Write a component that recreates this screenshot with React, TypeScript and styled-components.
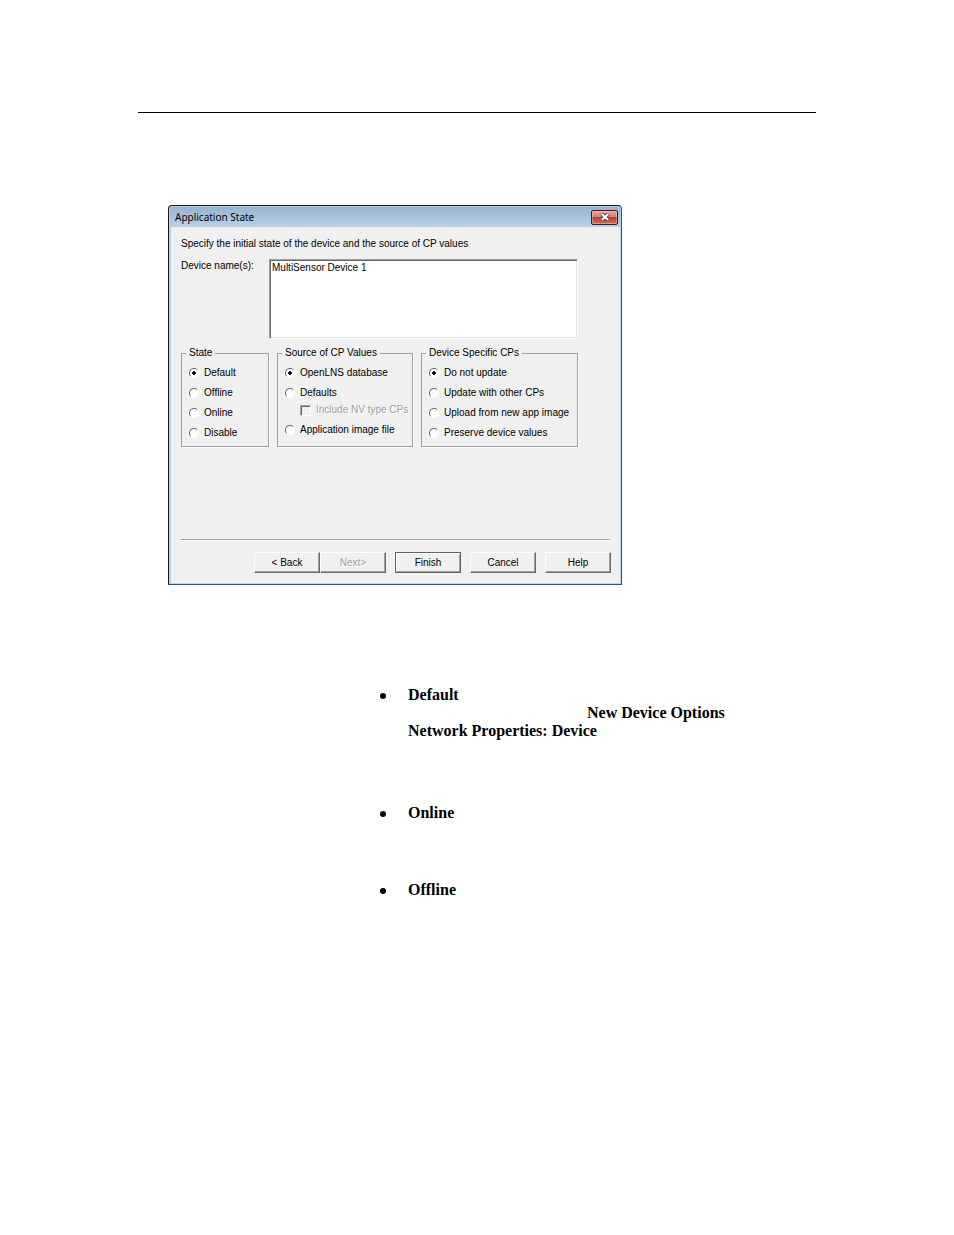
import React, { useState } from "react";
import styled, { createGlobalStyle, css } from "styled-components";

interface Option {
  value: string;
  label: string;
}

interface OptionListProps {
  name: string;
  options: Option[];
  value: string;
  onChange: (value: string) => void;
}

const stateOptions: Option[] = [
  { value: "default", label: "Default" },
  { value: "offline", label: "Offline" },
  { value: "online", label: "Online" },
  { value: "disable", label: "Disable" },
];

const deviceOptions: Option[] = [
  { value: "keep", label: "Do not update" },
  { value: "other", label: "Update with other CPs" },
  { value: "upload", label: "Upload from new app image" },
  { value: "preserve", label: "Preserve device values" },
];

const OptionList: React.FC<OptionListProps> = ({ name, options, value, onChange }) => (
  <>
    {options.map((option) => (
      <OptionLabel key={option.value}>
        <Radio
          type="radio"
          name={name}
          checked={value === option.value}
          onChange={() => onChange(option.value)}
        />
        {option.label}
      </OptionLabel>
    ))}
  </>
);

const App: React.FC = () => {
  const [state, setState] = useState("default");
  const [source, setSource] = useState("database");
  const [deviceCps, setDeviceCps] = useState("keep");
  const [deviceName, setDeviceName] = useState("MultiSensor Device 1");

  return (
    <Page>
      <GlobalStyle />
      <Rule />

      <Dialog>
        <TitleBar>
          <Title>Application State</Title>
          <CloseButton aria-label="Close">
            <svg width="10" height="8" viewBox="0 0 10 8">
              <path d="M2 1.2 8 6.8M8 1.2 2 6.8" stroke="#4c4450" strokeWidth="4" />
              <path d="M2 1.2 8 6.8M8 1.2 2 6.8" stroke="#fff" strokeWidth="2.2" />
            </svg>
          </CloseButton>
        </TitleBar>

        <Body>
          <Intro>Specify the initial state of the device and the source of CP values</Intro>

          <NameRow>
            <label htmlFor="device-names">Device name(s):</label>
            <NameBox
              id="device-names"
              value={deviceName}
              spellCheck={false}
              onChange={(e) => setDeviceName(e.target.value)}
            />
          </NameRow>

          <Groups>
            <Group>
              <Legend>State</Legend>
              <OptionList name="state" options={stateOptions} value={state} onChange={setState} />
            </Group>

            <Group>
              <Legend>Source of CP Values</Legend>
              <OptionList
                name="source"
                options={[
                  { value: "database", label: "OpenLNS database" },
                  { value: "defaults", label: "Defaults" },
                ]}
                value={source}
                onChange={setSource}
              />
              <CheckLabel>
                <Checkbox type="checkbox" disabled />
                Include NV type CPs
              </CheckLabel>
              <OptionList
                name="source"
                options={[{ value: "image", label: "Application image file" }]}
                value={source}
                onChange={setSource}
              />
            </Group>

            <Group>
              <Legend>Device Specific CPs</Legend>
              <OptionList name="device" options={deviceOptions} value={deviceCps} onChange={setDeviceCps} />
            </Group>
          </Groups>

          <Divider />

          <Footer>
            <StepButtons>
              <Button>&lt; Back</Button>
              <Button disabled>Next&gt;</Button>
            </StepButtons>
            <Button $primary>Finish</Button>
            <Button>Cancel</Button>
            <Button>Help</Button>
          </Footer>
        </Body>
      </Dialog>

      <Notes>
        <Note $height={118}>
          Default
          <Indented>New Device Options</Indented>
          Network Properties: Device
        </Note>
        <Note $height={77}>Online</Note>
        <Note $height={18}>Offline</Note>
      </Notes>
    </Page>
  );
};

export default App;

const GlobalStyle = createGlobalStyle`
  *, *::before, *::after {
    box-sizing: border-box;
  }
  body {
    margin: 0;
    background: #fff;
    color: #000;
  }
  button, textarea {
    font: inherit;
    color: inherit;
  }
`;

const Page = styled.main`
  padding: 112px 138px;
`;

const Rule = styled.hr`
  margin: 0;
  border: 0;
  border-top: 1px solid #000;
`;

const Dialog = styled.section`
  max-width: 454px;
  margin: 92px 0 0 30px;
  border: 1px solid #16181c;
  border-right-color: #1d5f73;
  border-bottom-color: #1d5f73;
  border-radius: 4px 4px 0 0;
  background: #b9d1ea;
  padding: 1px;
  font: 10px/14px "Liberation Sans", Arial, sans-serif;
`;

const TitleBar = styled.header`
  display: flex;
  align-items: center;
  justify-content: space-between;
  height: 20px;
  padding: 0 2px 0 5px;
  border-radius: 3px 3px 0 0;
  background: linear-gradient(#98b4d1, #b9d1ea);
`;

const Title = styled.h1`
  margin: 0;
  font: 10px/16px "Noto Sans", sans-serif;
`;

const CloseButton = styled.button`
  display: flex;
  align-items: center;
  justify-content: center;
  width: 27px;
  height: 15px;
  padding: 0;
  border: 1px solid #4b1420;
  border-radius: 2px;
  background: linear-gradient(#e3a196, #d68577 45%, #b8402b 50%, #cf6f5c);
  box-shadow: inset 0 0 0 1px rgba(255, 255, 255, 0.3);
`;

const Body = styled.div`
  margin: 0 0 0 1px;
  padding: 10px 9px 10px 10px;
  background: #f0f0f0;
`;

const Intro = styled.p`
  margin: 0 0 8px;
`;

const NameRow = styled.div`
  display: grid;
  grid-template-columns: 88px 1fr;
  padding-right: 33px;
`;

const NameBox = styled.textarea`
  height: 80px;
  padding: 1px 2px;
  border: 1px solid;
  border-color: #a0a0a0 #fff #fff #a0a0a0;
  box-shadow: inset 1px 1px #696969, inset -1px -1px #e3e3e3;
  background: #fff;
  resize: none;
  outline: none;
`;

const Groups = styled.div`
  display: grid;
  grid-template-columns: 88fr 136fr 157fr;
  gap: 8px;
  margin-top: 6px;
  padding-right: 33px;
`;

const Group = styled.fieldset`
  display: flex;
  flex-direction: column;
  gap: 6px;
  min-width: 0;
  margin: 0;
  padding: 5px 7px 6px;
  border: 1px solid #a0a0a0;
  box-shadow: 1px 1px #fff;
`;

const Legend = styled.legend`
  margin-left: -3px;
  padding: 0 3px;
  line-height: 16px;
`;

const OptionLabel = styled.label`
  display: flex;
  align-items: center;
  gap: 5px;
  white-space: nowrap;
`;

const CheckLabel = styled(OptionLabel)`
  margin: -3px 0 0 15px;
  color: #a0a0a0;
  text-shadow: 1px 1px #fff;
`;

const Radio = styled.input`
  appearance: none;
  flex: none;
  width: 10px;
  height: 10px;
  margin: 0;
  border: 1px solid;
  border-color: #696969 #fff #fff #696969;
  border-radius: 50%;
  background: #fff;

  &:checked {
    background: radial-gradient(circle, #000 0 1.5px, #fff 2px);
  }
`;

const Checkbox = styled.input`
  appearance: none;
  flex: none;
  width: 11px;
  height: 11px;
  margin: 0;
  border: 1px solid;
  border-color: #a0a0a0 #fff #fff #a0a0a0;
  box-shadow: inset 1px 1px #696969;
  background: #f0f0f0;
`;

const Divider = styled.hr`
  margin: 92px 1px 0 0;
  border: 0;
  border-top: 1px solid #a0a0a0;
  border-bottom: 1px solid #fff;
`;

const Footer = styled.footer`
  display: flex;
  justify-content: flex-end;
  gap: 9px;
  padding-top: 11px;
`;

const StepButtons = styled.div`
  display: flex;
`;

const Button = styled.button<{ $primary?: boolean }>`
  width: 66px;
  height: 21px;
  padding: 0;
  border: 1px solid;
  border-color: #fff #696969 #696969 #fff;
  background: #f0f0f0;
  box-shadow: inset -1px -1px #a0a0a0;

  ${({ $primary }) =>
    $primary &&
    css`
      border-color: #646464;
      box-shadow: inset 1px 1px #fff, inset -1px -1px #a0a0a0;
    `}

  &:disabled {
    color: #a0a0a0;
    text-shadow: 1px 1px #fff;
  }
`;

const Notes = styled.ul`
  margin: 101px 0 0 242px;
  padding: 0;
  list-style: none;
  font: bold 16px/18px "Liberation Serif", "Times New Roman", serif;
`;

const Note = styled.li<{ $height: number }>`
  position: relative;
  min-height: ${({ $height }) => $height}px;
  padding-left: 28px;

  &::before {
    content: "";
    position: absolute;
    top: 7px;
    left: 0;
    width: 6px;
    height: 6px;
    border-radius: 50%;
    background: #000;
  }
`;

const Indented = styled.span`
  display: block;
  padding-left: 179px;
`;
